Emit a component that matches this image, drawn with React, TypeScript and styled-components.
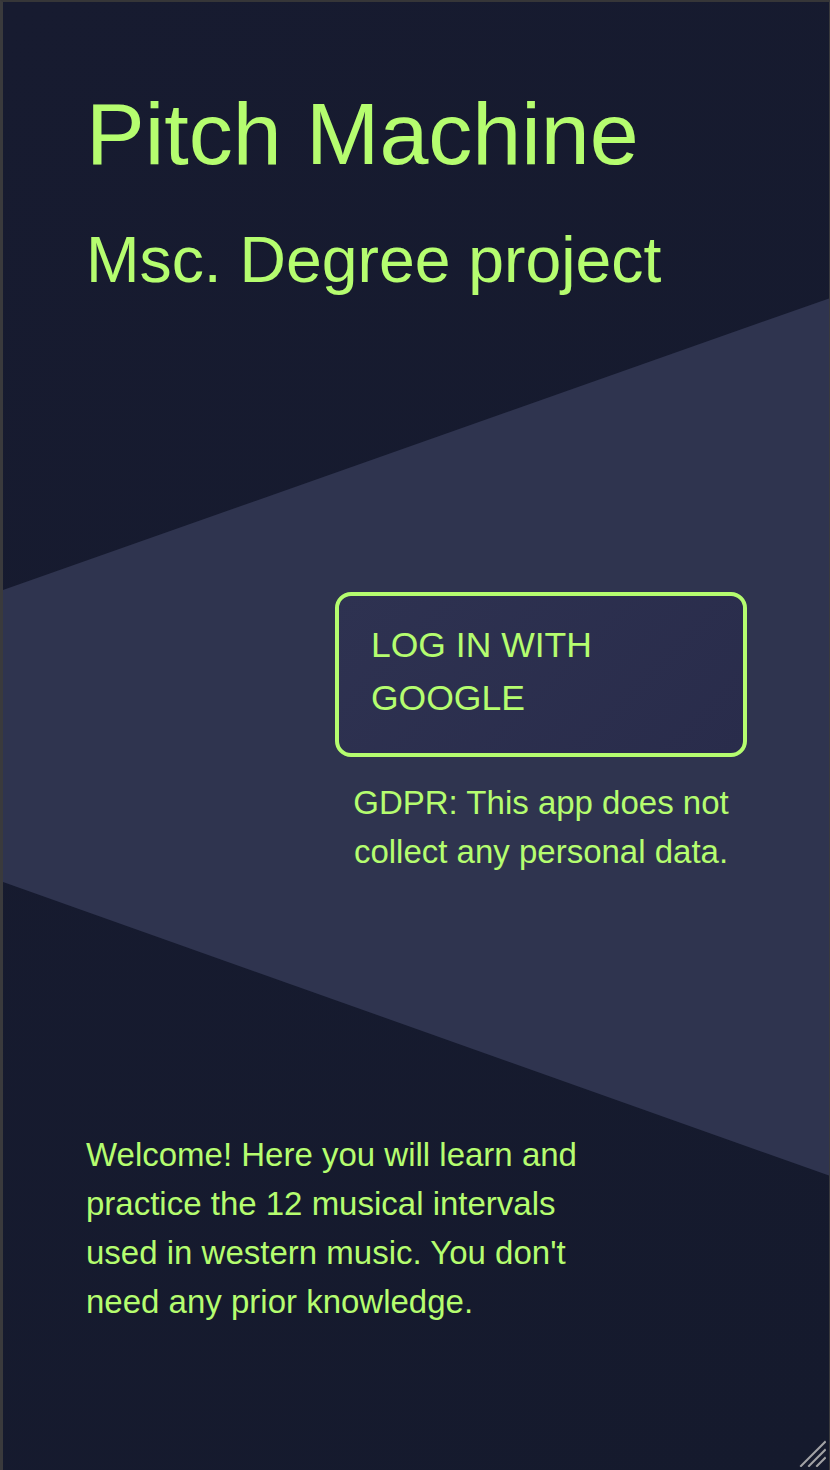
import React from "react";
import styled, { createGlobalStyle } from "styled-components";

const Global = createGlobalStyle`
  html, body { margin: 0; padding: 0; background: #161a2e; }
  * { box-sizing: border-box; }
  body { font-family: "Liberation Sans", Arial, Helvetica, sans-serif; }
`;

const GREEN = "#b5fd6f";

const Frame = styled.div`
  position: relative;
  width: 830px;
  height: 1470px;
  overflow: hidden;
  background: linear-gradient(135deg, #171b30 0%, #151a2d 100%);
  border-left: 3px solid #3a3a3c;
  border-top: 2px solid #363638;
  border-right: 1px solid #3a3a3c;
  color: ${GREEN};

  &::before {
    content: "";
    position: absolute;
    inset: 0;
    background: #2f344f;
    clip-path: polygon(0 588px, 830px 295px, 830px 1175px, 0 880px);
    z-index: 0;
  }
`;

const Content = styled.main`
  position: relative;
  z-index: 1;
  display: flex;
  flex-direction: column;
  padding: 81px 82px 0 83px;
`;

const Title = styled.h1`
  margin: 0;
  font-size: 88px;
  font-weight: 400;
  line-height: 1.15;
`;

const Subtitle = styled.h2`
  margin: 40px 0 0;
  font-size: 64.3px;
  font-weight: 400;
  line-height: 1.15;
`;

const LoginArea = styled.section`
  margin-top: 294px;
  align-self: flex-end;
  width: 412px;
  display: flex;
  flex-direction: column;
`;

const LoginButton = styled.button`
  width: 412px;
  height: 165px;
  padding: 23px 30px 27px 32px;
  border: 4px solid ${GREEN};
  border-radius: 16px;
  background: linear-gradient(135deg, #2e3251 0%, #292c4b 100%);
  color: ${GREEN};
  font-family: "Liberation Sans", Arial, Helvetica, sans-serif;
  font-size: 35.5px;
  line-height: 52.6px;
  text-align: left;
  display: flex;
  align-items: flex-start;
  cursor: pointer;
`;

const Note = styled.p`
  margin: 22px 0 0;
  font-size: 33px;
  line-height: 48.5px;
  text-align: center;
`;

const Welcome = styled.p`
  margin: 254px 0 0;
  width: 505px;
  font-size: 33px;
  line-height: 49px;
`;

const Grip = styled.svg`
  position: absolute;
  right: 3px;
  bottom: 3px;
  width: 27px;
  height: 27px;
  z-index: 2;
`;

export default function App() {
  return (
    <>
      <Global />
      <Frame>
        <Content>
          <Title>Pitch Machine</Title>
          <Subtitle>Msc. Degree project</Subtitle>
          <LoginArea>
            <LoginButton>LOG IN WITH GOOGLE</LoginButton>
            <Note>GDPR: This app does not collect any personal data.</Note>
          </LoginArea>
          <Welcome>
            Welcome! Here you will learn and practice the 12 musical intervals
            used in western music. You don't need any prior knowledge.
          </Welcome>
        </Content>
        <Grip viewBox="0 0 27 27">
          <g stroke="#a3a3a6" strokeWidth="2" strokeLinecap="square">
            <line x1="2" y1="26" x2="26" y2="2" />
            <line x1="10" y1="26" x2="26" y2="10" />
            <line x1="18" y1="26" x2="26" y2="18" />
          </g>
        </Grip>
      </Frame>
    </>
  );
}
